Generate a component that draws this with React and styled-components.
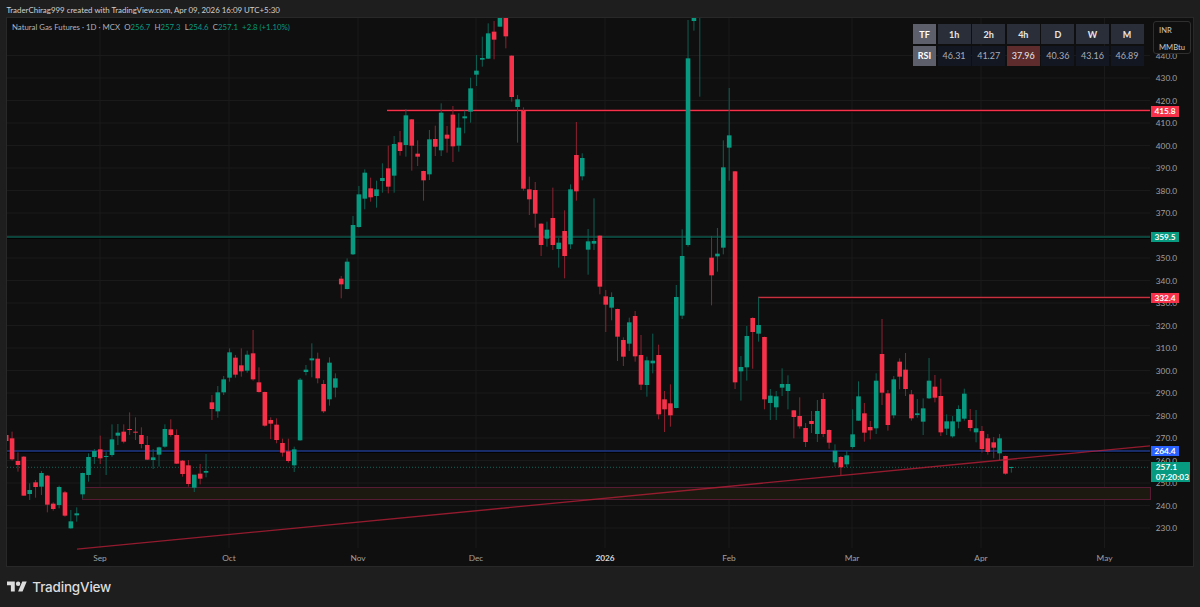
import React from 'react'
import styled, { createGlobalStyle } from 'styled-components'

// Candle rows: "dir high top bottom low", y values in thirds of a px above a base y
const rows = (base, text) =>
    text
        .trim()
        .split('\n')
        .map((line) => {
            const [dir, high, top, bottom, low] = line.trim().split(' ')
            return {
                up: dir === 'g',
                high: base + high / 3,
                top: base + top / 3,
                bottom: base + bottom / 3,
                low: base + low / 3,
            }
        })

const candles = [
    ...rows(340, `
        r 280 285 303 306
        r 275 295 358 362
        r 337 363 375 395
        r 348 350 467 467
        g 430 450 462 480
        r 420 427 441 473
        g 393 399 440 465
        r 405 407 494 517
        r 487 491 507 512
        g 437 441 495 505
        r 453 457 527 530
        g 510 544 565 566
        g 502 520 526 545
        g 398 399 463 475
        g 340 351 405 425
        g 327 333 351 372
        r 287 328 355 372
        g 335 348 351 405
        g 253 298 345 350
        g 252 278 287 315
        r 253 275 305 310
        r 217 267 269 285
        r 232 275 277 300
        r 262 285 312 325
        r 288 315 359 360
        g 327 352 360 387
        g 320 322 344 380
        g 253 267 320 323
        r 238 268 285 290
        r 268 285 371 372
        r 360 362 402 410
        r 360 376 432 440
        g 405 404 443 456
        r 372 401 416 433
        g 342 393 398 412
        r 165 187 207 240
        g 138 157 214 233
        g 108 118 157 165
        g 25 37 113 125
        r 45 53 104 113
        r 25 76 94 110
        g 32 44 92 98
        r -30 40 118 122
        r 82 127 156 158
        r 155 156 257 260
        r 232 240 251 297
        r 235 254 300 310
        r 296 309 338 350
        r 296 334 363 368
        g 320 328 376 396
        g 114 119 301 302
        g 75 89 96 106
        g 10 55 61 112
        r 38 56 115 130
        r 120 132 214 219
        g 52 68 178 197
        g 100 115 143 172
    `),
    ...rows(0, `
        r 828 836 853 895
        g 775 785 867 868
        g 648 675 763 765
        g 558 583 681 683
        g 508 518 596 628
        r 533 565 592 605
        g 542 568 588 623
        g 490 534 543 578
        r 437 505 560 580
        g 408 432 527 578
        r 393 427 453 467
        g 327 346 435 470
        r 357 358 437 512
        r 421 461 470 498
        r 512 513 541 602
        g 390 418 523 540
        r 377 417 440 468
        g 310 338 451 468
        r 378 404 416 458
        r 318 344 439 486
        g 340 383 437 455
        g 332 349 355 400
        g 233 265 335 368
        g 165 212 224 258
        g 110 174 179 200
        g 70 100 176 177
        r 63 95 119 178
        g 20 30 80 80
        r 20 30 109 145
        r 166 167 291 305
        g 285 298 321 428
        r 322 332 566 572
        r 530 568 598 645
        r 546 570 641 683
        r 670 671 735 768
        g 665 689 716 740
        r 563 654 735 750
        g 714 728 747 803
        r 631 693 768 835
        g 553 568 733 747
        r 366 465 574 602
        g 460 474 529 541
        g 687 724 749 824
        g 595 723 731 750
        r 706 707 860 883
        r 870 889 914 996
        g 877 891 923 961
        r 926 927 1010 1083
        r 1012 1020 1070 1098
        g 953 967 1031 1053
        r 933 948 1069 1085
        r 1005 1065 1154 1170
        g 1070 1081 1155 1190
        g 1001 1082 1090 1120
        r 1034 1065 1243 1258
        r 1173 1198 1228 1296
        r 1153 1210 1246 1280
        g 855 891 1224 1225
        g 688 768 947 957
        g 60 175 735 740
        g 40 30 63 92
        g 0 -20 -10 290
        g -60 -40 -30 -20
        r 708 773 826 916
        g 684 761 769 815
        g 421 502 743 763
        g 264 406 443 542
        r 513 514 1147 1167
        g 1068 1101 1114 1202
        g 978 1008 1102 1142
        r 952 954 996 1106
        g 892 975 1001 1025
        r 1010 1011 1198 1228
        g 1167 1187 1209 1260
        g 1173 1189 1222 1260
        g 1105 1152 1163 1188
        g 1126 1152 1173 1228
        r 1230 1231 1251 1315
        r 1192 1248 1279 1286
        r 1269 1284 1326 1341
        r 1233 1263 1272 1299
        g 1200 1233 1302 1326
        r 1179 1197 1302 1311
    `),
    ...rows(310, `
        r 358 360 398 416
        g 403 422 457 470
        r 438 441 472 497
        g 423 436 463 472
        g 298 373 411 416
        g 214 259 332 332
        r 279 310 368 395
        r 333 351 361 388
        g 190 212 355 372
        r 27 132 248 285
        r 240 250 345 362
        g 198 208 316 325
        r 145 155 200 238
        r 129 179 237 258
        r 240 253 325 332
        g 267 310 315 323
        g 265 295 335 375
        g 144 212 265 267
        r 195 230 263 277
        r 206 258 367 378
        g 313 334 356 375
        g 318 334 379 383
        g 286 297 335 355
        g 236 251 326 332
        r 297 330 354 364
        g 300 355 367 397
        r 348 363 417 428
        r 372 385 426 434
        r 381 397 413 445
        g 372 385 430 450
        r 437 438 491 494
        g 470 471 474 488
    `),
]

const FIRST_X = 6.2
const STEP = 5.878
const GREEN = '#089981'
const RED = '#f7314a'

const priceY = (price) => 78 + (430 - price) * 2.25
const prices = Array.from({ length: 22 }, (_, i) => 440 - i * 10)
const months = [
    { label: 'Sep', x: 100 },
    { label: 'Oct', x: 229 },
    { label: 'Nov', x: 358 },
    { label: 'Dec', x: 476 },
    { label: '2026', x: 605, year: true },
    { label: 'Feb', x: 729 },
    { label: 'Mar', x: 852 },
    { label: 'Apr', x: 981 },
    { label: 'May', x: 1104.5 },
]

const levels = [
    { y: 110.5, x: 387, color: '#f7314a' },
    { y: 237, x: 7, color: '#0d5a4e' },
    { y: 297.5, x: 758, color: '#c9303f' },
    { y: 451, x: 7, color: '#1f3a8c' },
]

const tags = [
    { y: 106, text: '415.8', color: '#f7314a' },
    { y: 231.7, text: '359.5', color: GREEN },
    { y: 292.6, text: '332.4', color: '#f7314a' },
    { y: 445.6, text: '264.4', color: '#2962ff' },
]

const timeframes = ['1h', '2h', '4h', 'D', 'W', 'M']
const rsi = ['46.31', '41.27', '37.96', '40.36', '43.16', '46.89']

const GlobalStyle = createGlobalStyle`
    html, body {
        margin: 0;
        padding: 0;
        background: #1e1e1e;
        overflow: hidden;
    }
`

const Page = styled.div`
    width: 1200px;
    height: 607px;
    display: flex;
    flex-direction: column;
    background: #1e1e1e;
    font-family: 'Lato', 'Roboto', sans-serif;
`

const Caption = styled.div`
    height: 17px;
    padding-left: 6.5px;
    padding-top: 3px;
    display: flex;
    align-items: center;
    box-sizing: border-box;
    font-size: 7.9px;
    color: #cfcfcf;
    white-space: nowrap;
`

const Panel = styled.div`
    position: relative;
    height: 550px;
    margin: 0 6px;
    border: 1px solid #282828;
    box-sizing: border-box;
    background: #0f0f0f;
    overflow: hidden;
`

const ChartSvg = styled.svg`
    display: block;
    width: 1186px;
    height: 548px;
`

const AxisText = styled.text`
    font-family: 'Lato', 'Roboto', sans-serif;
    font-size: 8.3px;
    fill: ${(p) => (p.$strong ? '#d8d8d8' : '#a0a0a0')};
    font-weight: ${(p) => (p.$strong ? 700 : 400)};
`

const Legend = styled.div`
    position: absolute;
    left: 5px;
    top: 4px;
    display: flex;
    gap: 4.2px;
    font-size: 7.8px;
    color: #b0b3bc;
    white-space: nowrap;
`

const LegendValue = styled.span`
    color: ${GREEN};
`

const RsiTable = styled.div`
    position: absolute;
    left: 906px;
    top: 6.4px;
    display: grid;
    grid-template-columns: 23px repeat(6, 33px);
    grid-auto-rows: 20px;
    gap: 1.6px;
`

const cellColors = {
    side: ['#5d606b', '#ffffff', 700],
    head: ['#2a2e39', '#e6e6e6', 700],
    value: ['#131722', '#a9acb5', 400],
    hot: ['#5e2c2c', '#e8e8e8', 400],
}

const Cell = styled.div`
    display: flex;
    align-items: center;
    justify-content: center;
    font-size: 9px;
    background: ${(p) => cellColors[p.$kind][0]};
    color: ${(p) => cellColors[p.$kind][1]};
    font-weight: ${(p) => cellColors[p.$kind][2]};
`

const UnitBox = styled.div`
    position: absolute;
    left: 1146px;
    top: 2.5px;
    width: 38px;
    height: 33px;
    box-sizing: border-box;
    padding: 3px 5px 0;
    display: flex;
    flex-direction: column;
    gap: 7px;
    border: 1px solid #2f2f2f;
    border-radius: 3px;
    background: #0f0f0f;
    font-size: 7.6px;
    line-height: 10px;
    font-weight: 500;
    color: #c2c2c2;
`

const PriceTag = styled.div`
    position: absolute;
    left: 1143.8px;
    width: ${(p) => p.$width || 28.4}px;
    height: ${(p) => p.$height || 10.7}px;
    display: flex;
    flex-direction: column;
    align-items: ${(p) => (p.$height ? 'flex-start' : 'center')};
    justify-content: center;
    padding-left: ${(p) => (p.$height ? 5 : 0)}px;
    box-sizing: border-box;
    font-size: 8.3px;
    line-height: 10px;
    font-weight: 700;
    color: #fff;
    background: ${(p) => p.$color};
`

const Footer = styled.div`
    flex: 1;
    padding-left: 7.3px;
    display: flex;
    align-items: center;
    gap: 5px;
    color: #dcdcdc;
`

const Wordmark = styled.span`
    font-family: 'Inter', 'Roboto', sans-serif;
    font-size: 13.5px;
    font-weight: 500;
    letter-spacing: -0.2px;
`

function Candle({ candle, index }) {
    const x = FIRST_X + index * STEP
    const color = candle.up ? GREEN : RED
    return (
        <g>
            <line
                x1={x}
                x2={x}
                y1={candle.high}
                y2={candle.low}
                stroke={candle.up ? '#0c6053' : '#8f2231'}
                strokeWidth="1"
            />
            <rect
                x={x - 2.3}
                y={candle.top}
                width="4.6"
                height={Math.max(candle.bottom - candle.top, 1)}
                fill={color}
            />
        </g>
    )
}

function Chart() {
    return (
        <ChartSvg viewBox="7 18 1186 548">
            {prices.map((price) => (
                <line
                    key={price}
                    x1="7"
                    x2="1150"
                    y1={priceY(price)}
                    y2={priceY(price)}
                    stroke="#1a1a1a"
                />
            ))}
            {months.map((m) => (
                <line key={m.label} x1={m.x} x2={m.x} y1="18" y2="548" stroke="#1a1a1a" />
            ))}

            <rect x="82.5" y="487.5" width="1068" height="12" fill="#1c1910" stroke="#571c33" />

            {levels.map((l) => (
                <g key={l.y}>
                    <line x1={l.x} x2="1150" y1={l.y + 0.8} y2={l.y + 0.8} stroke="#000" strokeWidth="2" />
                    <line x1={l.x} x2="1150" y1={l.y} y2={l.y} stroke={l.color} strokeWidth="1.4" />
                </g>
            ))}
            <line x1="7" x2="1150" y1="467.3" y2="467.3" stroke="#0f6355" strokeDasharray="1 2" />

            {candles.map((c, i) => (
                <Candle key={i} candle={c} index={i} />
            ))}

            <line x1="77" y1="549.2" x2="1150" y2="445.8" stroke="#b51e36" strokeOpacity="0.8" strokeWidth="1.3" />

            {prices
                .filter((price) => price !== 360)
                .map((price) => (
                    <AxisText key={price} x="1155.8" y={priceY(price) + 3}>
                        {price}.0
                    </AxisText>
                ))}
            {months.map((m) => (
                <AxisText key={m.label} x={m.x} y="561.3" textAnchor="middle" $strong={m.year}>
                    {m.label}
                </AxisText>
            ))}
        </ChartSvg>
    )
}

function App() {
    return (
        <Page>
            <GlobalStyle />
            <Caption>TraderChirag999 created with TradingView.com, Apr 09, 2026 16:09 UTC+5:30</Caption>
            <Panel>
                <Chart />
                <Legend>
                    <span>Natural Gas Futures · 1D · MCX</span>
                    <span>O<LegendValue>256.7</LegendValue></span>
                    <span>H<LegendValue>257.3</LegendValue></span>
                    <span>L<LegendValue>254.6</LegendValue></span>
                    <span>C<LegendValue>257.1</LegendValue></span>
                    <LegendValue>+2.8 (+1.10%)</LegendValue>
                </Legend>
                <RsiTable>
                    <Cell $kind="side">TF</Cell>
                    {timeframes.map((tf) => (
                        <Cell key={tf} $kind="head">{tf}</Cell>
                    ))}
                    <Cell $kind="side">RSI</Cell>
                    {rsi.map((value) => (
                        <Cell key={value} $kind={value === '37.96' ? 'hot' : 'value'}>{value}</Cell>
                    ))}
                </RsiTable>
                <UnitBox>
                    <span>INR</span>
                    <span>MMBtu</span>
                </UnitBox>
                {tags.map((t) => (
                    <PriceTag key={t.text} $color={t.color} style={{ top: t.y - 18 }}>
                        {t.text}
                    </PriceTag>
                ))}
                <PriceTag $color={GREEN} $width={39.2} $height={20} style={{ top: 443.7 }}>
                    <span>257.1</span>
                    <span>07:20:03</span>
                </PriceTag>
            </Panel>
            <Footer>
                <svg width="20" height="16" viewBox="0 0 36 28" fill="#dcdcdc">
                    <path d="M14 22H7V11H0V4h14v18zM28 22h-8l7.5-18h8L28 22z" />
                    <circle cx="20" cy="8" r="4" />
                </svg>
                <Wordmark>TradingView</Wordmark>
            </Footer>
        </Page>
    )
}

export default App
